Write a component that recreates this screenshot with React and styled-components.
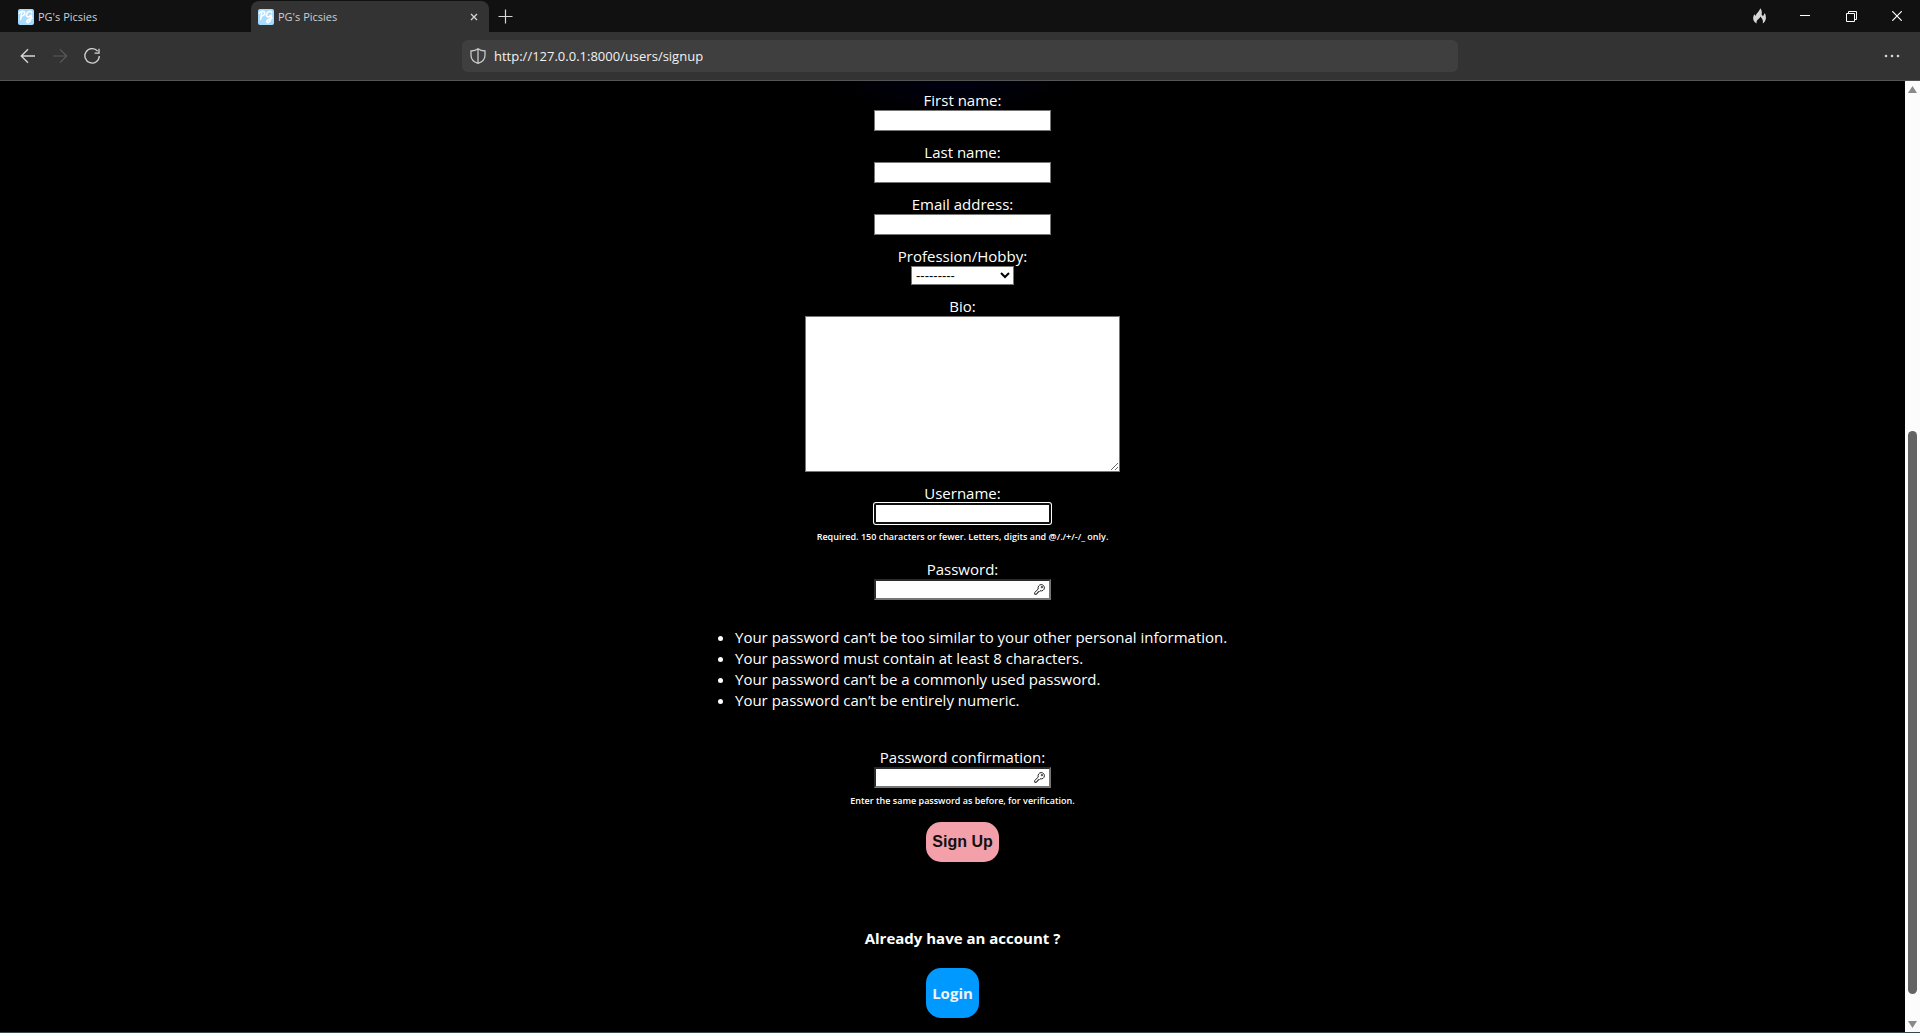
import React from "react";
import styled, { createGlobalStyle } from "styled-components";

const GlobalStyle = createGlobalStyle`
  *, *::before, *::after { box-sizing: border-box; }
  body {
    margin: 0;
    background: #000;
    color: #fff;
    font-family: "Open Sans", "Noto Sans", sans-serif;
    font-size: 15px;
  }
`;

const Window = styled.div`
  display: flex;
  flex-direction: column;
  min-height: 100vh;
  border-bottom: 1px solid #37474f;
`;

const TabStrip = styled.header`
  display: flex;
  align-items: stretch;
  height: 32px;
  padding: 1px 0 0 11px;
  background: #111;
`;

const Tab = styled.div`
  display: flex;
  align-items: center;
  gap: 4px;
  width: ${(p) => (p.$active ? 238 : 240)}px;
  padding: 0 6px 0 7px;
  border-radius: 8px 8px 0 0;
  background: ${(p) => (p.$active ? "#333" : "transparent")};
  color: #d0d0d0;
  font-size: 11px;
`;

const TabTitle = styled.span`
  flex: 1;
  line-height: 16px;
`;

const Favicon = styled.span`
  display: grid;
  place-items: center;
  width: 16px;
  height: 16px;
  border-radius: 2px;
  background: #a6dcff;
  color: #fff;
`;

const IconButton = styled.button`
  display: grid;
  place-items: center;
  width: ${(p) => p.$w || 32}px;
  height: 30px;
  padding: 0;
  border: 0;
  background: transparent;
  color: ${(p) => p.$color || "#d6d6d6"};
`;

const WindowControls = styled.div`
  display: flex;
  margin-left: auto;
`;

const Toolbar = styled.nav`
  display: grid;
  grid-template-columns: 1fr minmax(0, 996px) 1fr;
  align-items: center;
  height: 49px;
  background: #333;
  border-bottom: 1px solid #555;
`;

const NavButtons = styled.div`
  display: flex;
  padding-left: 12px;
`;

const MenuSlot = styled.div`
  display: flex;
  justify-content: flex-end;
  padding-right: 12px;
`;

const AddressBar = styled.label`
  display: flex;
  align-items: center;
  gap: 8px;
  height: 32px;
  padding: 0 8px;
  border-radius: 6px;
  background: #3f3f3f;
  color: #c8c8c8;
`;

const AddressInput = styled.input`
  flex: 1;
  min-width: 0;
  padding: 0;
  border: 0;
  outline: 0;
  background: transparent;
  color: #f2f2f2;
  font: 13px "Open Sans", "Noto Sans", sans-serif;
`;

const Viewport = styled.div`
  display: flex;
  flex: 1;
`;

const Page = styled.main`
  display: flex;
  flex: 1;
  flex-direction: column;
  align-items: center;
  padding: 9px 0 14px 20px;
  background: radial-gradient(ellipse 130px 34px at 50% 0, #000012, #000);
`;

const Form = styled.form`
  display: flex;
  flex-direction: column;
  align-items: center;
`;

const Field = styled.div`
  display: flex;
  flex-direction: column;
  align-items: center;
  padding-bottom: ${(p) => (p.$last ? 10 : 11)}px;
`;

const Label = styled.label`
  line-height: 20px;
`;

const TextInput = styled.input`
  width: 177px;
  height: 21px;
  padding: 1px 2px;
  border: 1px solid #767676;
  background: #fff;
  outline: 0;
  font: 13px "Liberation Sans", Arial, sans-serif;
`;

const ActiveInput = styled(TextInput)`
  border: 2px solid #101010;
  border-radius: 2px;
  box-shadow: 0 0 0 1px #fff;
`;

const PasswordInput = styled(TextInput)`
  border: 2px solid;
  border-color: #2b2b2b #767676 #767676 #2b2b2b;
`;

const PasswordBox = styled.div`
  position: relative;
  display: flex;
`;

const KeyIcon = styled.svg`
  position: absolute;
  top: 5px;
  right: 6px;
`;

const Select = styled.select`
  width: 103px;
  height: 19px;
  padding: 0;
  border: 1px solid #767676;
  border-radius: 0;
  background: #fff;
  color: #000;
  font: 13px "Liberation Sans", Arial, sans-serif;
`;

const Bio = styled.textarea`
  width: 315px;
  height: 156px;
  border: 1px solid #767676;
  background: #fff;
  resize: both;
  outline: 0;
`;

const Help = styled.small`
  padding-top: 2px;
  font-size: 9px;
  font-weight: 600;
  line-height: 22px;
`;

const Rules = styled.ul`
  width: 495px;
  margin: 16px 0 36px 40px;
  padding: 0;
  line-height: 21px;
  white-space: nowrap;
`;

const SignUpButton = styled.button`
  height: 40px;
  padding: 0 6px;
  border: 0;
  border-radius: 15px;
  background: #f4a0aa;
  color: #111;
  font: bold 16px "Liberation Sans", Arial, sans-serif;
`;

const Existing = styled.section`
  display: flex;
  flex-direction: column;
  align-items: center;
  padding-top: 66px;
`;

const Prompt = styled.h2`
  margin: 0 0 19px;
  font-size: 15px;
  font-weight: 700;
  line-height: 21px;
`;

const LoginRow = styled.div`
  display: flex;
  width: 73px;
`;

const LoginLink = styled.a`
  display: grid;
  place-items: center;
  width: 53px;
  height: 50px;
  border-radius: 15px;
  background: #09f;
  color: #f2f2f2;
  font-weight: 700;
  text-decoration: none;
`;

const ScrollBar = styled.div`
  display: flex;
  flex-direction: column;
  align-items: center;
  justify-content: space-between;
  width: 15px;
  padding: 5px 0 4px;
  background: #fcfcfc;
`;

const ScrollTrack = styled.div`
  display: grid;
  grid-template-rows: 338fr 563fr 27fr;
  flex: 1;
  width: 9px;
`;

const ScrollThumb = styled.div`
  grid-row: 2;
  border-radius: 5px;
  background: #636363;
`;

const Stroke = ({ size = 16, width = 1, children }) => (
  <svg width={size} height={size} viewBox={`0 0 ${size} ${size}`} fill="none" stroke="currentColor" strokeWidth={width} aria-hidden="true">
    {children}
  </svg>
);

const SiteIcon = () => (
  <Favicon aria-hidden="true">
    <svg width="16" height="16" viewBox="0 0 16 16" fill="none" stroke="#fff" strokeWidth="1.6" strokeLinecap="round" strokeLinejoin="round">
      <path d="M3.8 3.2 2.6 10.4M1.4 4.2C3 1.6 7.2 1.8 6.7 4.4 6.4 6.4 4.7 7 3.4 6.8" />
      <path d="M13.6 3.6C12.8 1.4 9.2 2.2 8.5 5.4 8 8 10.6 8.8 12.6 6.4L13.4 6 12.5 10.6C11.8 14 8.4 14.4 8.8 12.2 9 10.8 11.6 10 14 9" />
    </svg>
  </Favicon>
);

const Key = () => (
  <KeyIcon width="11" height="11" viewBox="0 0 11 11" fill="none" stroke="#222" strokeWidth="1" strokeLinejoin="round" aria-hidden="true">
    <path d="M4.2 5.1C3.6 2.8 5 .6 7.2.6 9.1.6 10.4 2 10.4 3.8 10.4 6 8.2 7.4 6 6.8L5 7.8H4V8.9H3L2.9 10.1.8 10.4.6 8.6Z" />
    <circle cx="7.9" cy="3.1" r=".7" />
  </KeyIcon>
);

const TextField = ({ id, label }) => (
  <Field>
    <Label htmlFor={id}>{label}</Label>
    <TextInput id={id} type="text" />
  </Field>
);

const PasswordField = ({ id }) => (
  <PasswordBox>
    <PasswordInput id={id} type="password" />
    <Key />
  </PasswordBox>
);

const passwordRules = [
  "Your password can’t be too similar to your other personal information.",
  "Your password must contain at least 8 characters.",
  "Your password can’t be a commonly used password.",
  "Your password can’t be entirely numeric.",
];

export default function App() {
  return (
    <>
      <GlobalStyle />
      <Window>
        <TabStrip>
          <Tab>
            <SiteIcon />
            <TabTitle>PG's Picsies</TabTitle>
          </Tab>
          <Tab $active>
            <SiteIcon />
            <TabTitle>PG's Picsies</TabTitle>
            <IconButton $w={18} aria-label="Close tab">
              <Stroke size={8} width={1.3}><path d="M1 1 7 7M7 1 1 7" /></Stroke>
            </IconButton>
          </Tab>
          <IconButton aria-label="New tab">
            <Stroke size={15} width={1.2}><path d="M7.5.5V14.5M.5 7.5H14.5" /></Stroke>
          </IconButton>
          <WindowControls>
            <IconButton $w={46} aria-label="Clear session">
              <svg width="13" height="16" viewBox="0 0 13 16" fill="currentColor" aria-hidden="true">
                <path d="M3.6 15.4C1.2 14.2 0 12.2.2 9.6.3 8.2.8 7.2 1.3 6.2L2.6 8C3 5.4 6.4 3.8 7.2.3 9 2.2 9 4.6 8.6 6.6L10 8.2 11.8 4.9C12.8 7 13.1 9 12.8 10.8 12.5 13 11.4 14.6 9.6 15.5 10.4 13.4 9.8 11.2 7.4 8.6 7 11 3 11.6 3.6 15.4Z" />
              </svg>
            </IconButton>
            <IconButton $w={46} $color="#fff" aria-label="Minimize">
              <Stroke size={10}><path d="M0 4.5H10" /></Stroke>
            </IconButton>
            <IconButton $w={46} $color="#fff" aria-label="Restore">
              <Stroke size={11}><path d="M.5 2.5H8.5V10.5H.5ZM2.5 2.5V.5H10.5V8.5H8.5" /></Stroke>
            </IconButton>
            <IconButton $w={46} $color="#fff" aria-label="Close window">
              <Stroke size={10} width={1.2}><path d="M.3.3 9.7 9.7M9.7.3.3 9.7" /></Stroke>
            </IconButton>
          </WindowControls>
        </TabStrip>

        <Toolbar>
          <NavButtons>
            <IconButton aria-label="Back">
              <Stroke width={1.4}><path d="M15 8H1.5M8 1.3 1.3 8 8 14.7" /></Stroke>
            </IconButton>
            <IconButton $color="#5a5a5a" aria-label="Forward">
              <Stroke width={1.2}><path d="M1 8H14.5M8 1.3 14.7 8 8 14.7" /></Stroke>
            </IconButton>
            <IconButton aria-label="Reload">
              <Stroke width={1.3}><path d="M13.6 3.2A7.2 7.2 0 1 0 15.3 8M15 .8V5.2H10.6" /></Stroke>
            </IconButton>
          </NavButtons>
          <AddressBar>
            <Stroke width={1.3}><path d="M8 .8C6 2.4 3.8 3 1 3V7.2C1 11.2 4 14 8 15.4 12 14 15 11.2 15 7.2V3C12.2 3 10 2.4 8 .8ZM8 .8V15.4" /></Stroke>
            <AddressInput aria-label="Address" defaultValue="http://127.0.0.1:8000/users/signup" />
          </AddressBar>
          <MenuSlot>
            <IconButton aria-label="Menu">
              <svg width="16" height="4" viewBox="0 0 16 4" fill="currentColor" aria-hidden="true">
                <circle cx="2" cy="2" r="1.3" /><circle cx="8" cy="2" r="1.3" /><circle cx="14" cy="2" r="1.3" />
              </svg>
            </IconButton>
          </MenuSlot>
        </Toolbar>

        <Viewport>
          <Page>
            <Form onSubmit={(e) => e.preventDefault()}>
              <TextField id="first-name" label="First name:" />
              <TextField id="last-name" label="Last name:" />
              <TextField id="email" label="Email address:" />
              <Field>
                <Label htmlFor="profession">Profession/Hobby:</Label>
                <Select id="profession"><option>---------</option></Select>
              </Field>
              <Field>
                <Label htmlFor="bio">Bio:</Label>
                <Bio id="bio" />
              </Field>
              <Field>
                <Label htmlFor="username">Username:</Label>
                <ActiveInput id="username" type="text" />
                <Help>Required. 150 characters or fewer. Letters, digits and @/./+/-/_ only.</Help>
              </Field>
              <Field>
                <Label htmlFor="password">Password:</Label>
                <PasswordField id="password" />
              </Field>
              <Rules>
                {passwordRules.map((rule) => <li key={rule}>{rule}</li>)}
              </Rules>
              <Field $last>
                <Label htmlFor="password-again">Password confirmation:</Label>
                <PasswordField id="password-again" />
                <Help>Enter the same password as before, for verification.</Help>
              </Field>
              <SignUpButton type="submit">Sign Up</SignUpButton>
            </Form>
            <Existing>
              <Prompt>Already have an account ?</Prompt>
              <LoginRow><LoginLink href="#login">Login</LoginLink></LoginRow>
            </Existing>
          </Page>
          <ScrollBar aria-hidden="true">
            <svg width="9" height="7" viewBox="0 0 9 7" fill="#8a8a8a"><path d="M4.5 0 9 7H0Z" /></svg>
            <ScrollTrack><ScrollThumb /></ScrollTrack>
            <svg width="9" height="7" viewBox="0 0 9 7" fill="#8a8a8a"><path d="M4.5 7 9 0H0Z" /></svg>
          </ScrollBar>
        </Viewport>
      </Window>
    </>
  );
}
